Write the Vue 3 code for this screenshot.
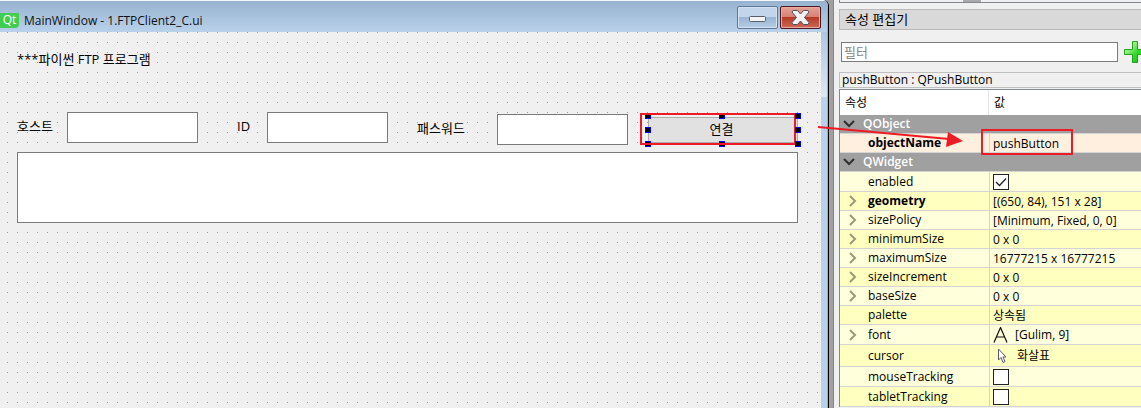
<script setup>
const rows = [
  { name: 'QObject', kind: 'group' },
  { name: 'objectName', value: 'pushButton', kind: 'changed', bold: true },
  { name: 'QWidget', kind: 'group' },
  { name: 'enabled', kind: 'light', check: true, checked: true },
  { name: 'geometry', value: '[(650, 84), 151 x 28]', kind: 'dark', bold: true, expand: true },
  { name: 'sizePolicy', value: '[Minimum, Fixed, 0, 0]', kind: 'light', expand: true },
  { name: 'minimumSize', value: '0 x 0', kind: 'dark', expand: true },
  { name: 'maximumSize', value: '16777215 x 16777215', kind: 'light', expand: true },
  { name: 'sizeIncrement', value: '0 x 0', kind: 'dark', expand: true },
  { name: 'baseSize', value: '0 x 0', kind: 'light', expand: true },
  { name: 'palette', value: '상속됨', kind: 'dark' },
  { name: 'font', value: '[Gulim, 9]', kind: 'light', expand: true, icon: 'font' },
  { name: 'cursor', value: '화살표', kind: 'dark', icon: 'cursor' },
  { name: 'mouseTracking', kind: 'light', check: true },
  { name: 'tabletTracking', kind: 'dark', check: true }
]
const handles = ['nw', 'n', 'ne', 'w', 'e', 'sw', 's', 'se']
</script>

<template>
  <main class="designer">
    <section class="window">
      <header class="titlebar">
        <span class="logo">Qt</span>
        <h1>MainWindow - 1.FTPClient2_C.ui</h1>
        <button class="caption min" type="button" aria-label="Minimize">
          <svg width="39" height="21" viewBox="0 0 39 21">
            <rect x="11.5" y="9.5" width="16" height="5" rx="1" fill="#f4f4f4" stroke="#56606e" />
          </svg>
        </button>
        <button class="caption close" type="button" aria-label="Close">
          <svg width="39" height="21" viewBox="0 0 39 21">
            <path d="M12 3.5h4.500l3 3.500 3-3.500H27l1 1.500-4.500 5.500 4.500 5-1 2h-4.500l-3-3.500-3 3.500H12l-1-2 4.500-5L11 5z" fill="#f3f3f3" stroke="#4f5365" stroke-linejoin="round" />
          </svg>
        </button>
      </header>
      <div class="body">
        <form class="canvas" @submit.prevent>
          <p class="heading">***파이썬 FTP 프로그램</p>
          <div class="fields">
            <label for="host">호스트</label>
            <input id="host" type="text">
            <label for="userid" class="second">ID</label>
            <input id="userid" type="text">
            <label for="password" class="third">패스워드</label>
            <input id="password" class="lower" type="password">
            <div class="selected">
              <button class="connect" type="button">연결</button>
              <i v-for="h in handles" :key="h" class="handle" :class="h"></i>
              <span class="mark"></span>
            </div>
          </div>
          <textarea class="log" aria-label="Log"></textarea>
        </form>
        <div class="frame"></div>
      </div>
    </section>

    <aside class="panel">
      <div class="upper"><span></span></div>
      <h2>속성 편집기</h2>
      <div class="filter">
        <input type="text" placeholder="필터" aria-label="필터">
        <button type="button" aria-label="Add">
          <svg width="22" height="22" viewBox="0 0 22 22">
            <defs>
              <linearGradient id="plusFill" x1="0" y1="0" x2="1" y2="1">
                <stop offset="0.2" stop-color="#b9f5a8" />
                <stop offset="0.55" stop-color="#35d82d" />
                <stop offset="1" stop-color="#0abf0a" />
              </linearGradient>
            </defs>
            <path d="M8.500.5h5v8h8v5h-8v8h-5v-8h-8v-5h8z" fill="url(#plusFill)" stroke="#1fa31b" />
          </svg>
        </button>
      </div>
      <p class="object">pushButton : QPushButton</p>
      <table>
        <colgroup><col class="names"><col></colgroup>
        <thead><tr><th scope="col">속성</th><th scope="col">값</th></tr></thead>
        <tbody>
          <tr v-for="row in rows" :key="row.name" :class="[row.kind, { tick: row.check || row.icon === 'font', tall: row.icon === 'cursor' }]">
            <th scope="row" :colspan="row.kind === 'group' ? 2 : 1">
              <div class="name" :class="{ bold: row.bold }">
                <svg v-if="row.kind === 'group'" class="open" width="12" height="8" viewBox="0 0 12 8"><path d="M1 1l5 5 5-5" fill="none" stroke="#303030" stroke-width="2" /></svg>
                <svg v-else-if="row.expand" class="shut" width="8" height="12" viewBox="0 0 8 12"><path d="M1 1l5 5-5 5" fill="none" stroke="#99997a" stroke-width="2" /></svg>
                <label v-if="row.check" :for="row.name">{{ row.name }}</label>
                <span v-else>{{ row.name }}</span>
              </div>
            </th>
            <td v-if="row.kind !== 'group'">
              <div class="value">
                <span v-if="row.check" class="box">
                  <input :id="row.name" type="checkbox" :checked="row.checked">
                  <svg v-if="row.checked" width="16" height="16" viewBox="0 0 16 16"><path d="M3 8l3.500 3.500L13 4.500" fill="none" stroke="#222" stroke-width="1.300" /></svg>
                </span>
                <svg v-if="row.icon === 'font'" class="glyph" width="16" height="16" viewBox="0 0 16 16"><path d="M1 15.500L7.500.5 14 15.500M3.500 10h8" fill="none" stroke="#111" stroke-width="1.200" /></svg>
                <svg v-if="row.icon === 'cursor'" class="glyph" width="18" height="16" viewBox="0 0 18 16"><path d="M5.500 1v11l2.500-2.500 2 5 2-1-2-4.500h3z" fill="#fff" stroke="#555a70" /></svg>
                <span v-if="row.value" class="text">{{ row.value }}</span>
                <span v-if="row.name === 'objectName'" class="ring"></span>
              </div>
            </td>
          </tr>
        </tbody>
      </table>
      <svg class="arrow" width="146" height="26" viewBox="0 0 146 26" aria-hidden="true">
        <path d="M1 6L132 18" stroke="#ed1c24" stroke-width="2" />
        <path d="M131 11l15 9-17 6z" fill="#ed1c24" />
      </svg>
    </aside>
  </main>
</template>

<style>
body { margin: 0; }
</style>

<style scoped>
* { box-sizing: border-box; }
.designer {
  display: flex;
  min-height: 100vh;
  overflow: hidden;
  background: #a0a0a0;
  color: #000;
  font: 12px/16px "Open Sans", "Noto Sans CJK KR", sans-serif;
}
h1, h2, p { margin: 0; font-weight: 400; }
button, input, textarea { font: inherit; margin: 0; padding: 0; border-radius: 0; }
svg { display: block; flex: none; }

.window {
  flex: 1;
  min-width: 0;
  display: flex;
  flex-direction: column;
  border-right: 1px solid #000;
  border-radius: 0 6px 0 0;
  overflow: hidden;
}
.titlebar {
  display: flex;
  align-items: center;
  gap: 2px;
  height: 32px;
  padding: 2px 6px 0 0;
  border-top: 1px solid #f4f8fc;
  border-right: 1px solid #4ccbee;
  background: linear-gradient(#97b3d0, #b9d1ea);
}
.logo {
  width: 19px;
  height: 15px;
  margin-top: 6px;
  border-radius: 0 0 4px 0;
  background: #41cd52;
  color: #fff;
  font-size: 12px;
  line-height: 14px;
  text-align: center;
}
.titlebar h1 {
  flex: 1;
  min-width: 0;
  padding: 7px 0 0 3px;
  font-size: 12px;
  white-space: nowrap;
  color: #111;
}
.caption {
  width: 41px;
  height: 23px;
  overflow: hidden;
  border-radius: 2px;
}
.min {
  border: 1px solid #5f7593;
  background: linear-gradient(#c3d5ea 50%, #9ab5d2 50%, #b5cde6);
  box-shadow: inset 0 0 0 1px #d4e2f1;
}
.close {
  border: 1px solid #4b1621;
  background: linear-gradient(#e5a196, #d67f70 50%, #b53a26 50%, #cf6b55);
  box-shadow: inset 0 0 0 1px #e9aca1;
}
.body { flex: 1; display: flex; }
.frame {
  width: 7px;
  border-right: 1px solid #4ccbee;
  background: linear-gradient(#adc7e2, #dce8f5 65px, #b9d1ea 65px);
}
.canvas {
  flex: 1;
  min-width: 0;
  padding: 19px 23px 0 17px;
  background: #f0f0f0 conic-gradient(at 1px 1px, transparent 75%, #999 0) 7px 0 / 10px 10px;
}
.heading, .fields, h2, .filter { font-size: 13px; }
.fields {
  display: grid;
  grid-template-columns: 50fr 131fr 69fr 121fr 109fr 131fr 20fr 150fr;
  margin-top: 45px;
  height: 31px;
}
.fields label { padding-top: 6px; white-space: nowrap; }
.fields .second { padding-left: 39px; }
.fields .third { padding: 8px 0 0 29px; }
.fields input { min-width: 0; height: 31px; border: 1px solid #7a7a7a; background: #fff; }
.fields .lower { margin-top: 2px; }
.selected { position: relative; grid-column: 8; height: 26px; margin-top: 5px; }
.connect {
  display: block;
  width: 100%;
  height: 26px;
  padding: 0 3px 2px 0;
  border: 1px solid #adadad;
  background: #e1e1e1;
}
.handle {
  position: absolute;
  width: 6px;
  height: 6px;
  border: 1px solid #00f;
  background: #000;
}
.nw, .w, .sw { left: -3px; }
.n, .s { left: 71px; }
.ne, .e, .se { right: -3px; z-index: 1; }
.nw, .n, .ne { top: -4px; }
.w, .e { top: 10px; }
.sw, .s, .se { bottom: -4px; }
.mark {
  position: absolute;
  inset: -4px 2px -2px -8px;
  border: 2px solid #ed1c24;
}
.log {
  display: block;
  width: 100%;
  height: 71px;
  margin-top: 9px;
  resize: none;
  border: 1px solid #7a7a7a;
  background: #fff;
}

.panel {
  position: relative;
  width: 308px;
  margin-left: 4px;
  padding-left: 5px;
  border-left: 1px solid #858585;
  background: #f0f0f0;
}
.upper { height: 3px; padding-left: 123px; border-bottom: 1px solid #828790; border-left: 1px solid #828790; }
.upper span { display: block; width: 18px; height: 2px; background: #aaa; }
h2 {
  height: 21px;
  margin-top: 6px;
  padding: 1px 5px;
  border: 1px solid #b9b9b9;
  border-right: 0;
  background: #d9d9d9;
}
.filter { display: flex; align-items: center; gap: 6px; margin-top: 11px; padding-left: 2px; height: 22px; }
.filter input {
  flex: 1;
  min-width: 0;
  height: 20px;
  padding: 0 2px;
  border: 1px solid #7a7a7a;
  background: #fff;
}
.filter input::placeholder { color: #858585; opacity: 1; }
.filter button { width: 17px; height: 22px; border: 0; background: none; overflow: hidden; }
.object {
  height: 16px;
  margin-top: 9px;
  padding-left: 2px;
  border: 1px solid #c0c0c0;
  border-right: 0;
  line-height: 14px;
}
table {
  width: 100%;
  margin-top: 1px;
  table-layout: fixed;
  border-spacing: 0;
  border-top: 1px solid #828790;
  border-left: 1px solid #828790;
  background: #fff;
}
.names { width: 149px; }
th, td { padding: 0; text-align: left; font-weight: 400; vertical-align: middle; }
thead th { height: 25px; padding-left: 5px; }
thead th:first-child { border-right: 1px solid #e5e5e5; }
tbody th, tbody td { height: 19px; border-bottom: 1px solid #d4d4d4; }
tbody td { border-left: 1px solid #d4d4d4; }
.tick th, .tick td { height: 20px; }
.tall th, .tall td { height: 22px; }
.light { background: #ffffdc; }
.dark { background: #ffffbf; }
.changed { background: #ffefdf; }
.group { background: #a0a0a0; color: #fff; }
.name { position: relative; padding: 1px 0 0 28px; height: 18px; }
.group .name { padding-left: 23px; font-weight: 600; }
.bold { font-weight: 700; }
.open { position: absolute; left: 3px; top: 5px; }
.shut { position: absolute; left: 9px; top: 3px; }
.value { position: relative; display: flex; align-items: center; height: 18px; padding-left: 3px; white-space: nowrap; }
.text { padding-top: 1px; }
.glyph { margin-right: 6px; }
.box { position: relative; width: 16px; height: 16px; }
.box input { display: block; width: 16px; height: 16px; appearance: none; border: 1px solid #222; background: #fff; }
.box svg { position: absolute; inset: 0; pointer-events: none; }
.ring { position: absolute; left: -9px; top: -5px; width: 92px; height: 26px; border: 2px solid #ed1c24; }
.arrow { position: absolute; left: -17px; top: 121px; pointer-events: none; }
</style>
